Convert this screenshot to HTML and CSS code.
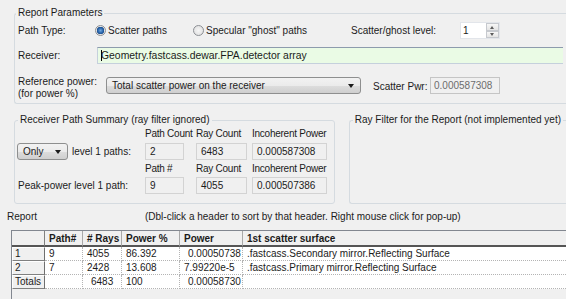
FILE: index.html
```html
<!DOCTYPE html>
<html lang="en">
<head>
    <meta charset="UTF-8">
    <title>Scatter Report</title>
    <link rel="stylesheet" href="styles.css">
</head>
<body>
    <fieldset class="group params">
        <legend>Report Parameters</legend>
        <div class="row pathRow">
            <span class="rowLabel pathLabel">Path Type:</span>
            <span class="radio scatter"><span class="dot checked"></span>Scatter paths</span>
            <span class="radio ghost"><span class="dot"></span>Specular "ghost" paths</span>
            <span class="levelLabel">Scatter/ghost level:</span>
            <div class="spinner">
                <span class="spinValue">1</span>
                <span class="spinButtons"><span class="spinUp"></span><span class="spinDown"></span></span>
            </div>
        </div>
        <div class="row receiverRow">
            <span class="rowLabel receiverLabel">Receiver:</span>
            <div class="receiverField"><span class="caret"></span>Geometry.fastcass.dewar.FPA.detector array</div>
        </div>
        <div class="row refRow">
            <span class="rowLabel refLabel">Reference power:<br>(for power %)</span>
            <div class="combo refCombo">Total scatter power on the receiver<span class="arrow"></span></div>
            <span class="pwrLabel">Scatter Pwr:</span>
            <div class="field disabled pwrField">0.000587308</div>
        </div>
    </fieldset>

    <div class="middle">
        <fieldset class="group summary">
            <legend>Receiver Path Summary (ray filter ignored)</legend>
            <div class="sumRow sumHead">
                <span></span>
                <span>Path Count</span>
                <span>Ray Count</span>
                <span>Incoherent Power</span>
            </div>
            <div class="sumRow sumFields">
                <span class="onlyCell"><span class="combo onlyCombo">Only<span class="arrow"></span></span>level 1 paths:</span>
                <span class="field f1">2</span>
                <span class="field f2">6483</span>
                <span class="field f3">0.000587308</span>
            </div>
            <div class="sumRow sumHead second">
                <span></span>
                <span>Path #</span>
                <span>Ray Count</span>
                <span>Incoherent Power</span>
            </div>
            <div class="sumRow sumFields second">
                <span>Peak-power level 1 path:</span>
                <span class="field f1">9</span>
                <span class="field f2">4055</span>
                <span class="field f3">0.000507386</span>
            </div>
        </fieldset>
        <fieldset class="group filter">
            <legend>Ray Filter for the Report (not implemented yet)</legend>
        </fieldset>
    </div>

    <div class="reportHead">
        <span class="reportTitle">Report</span>
        <span class="hint">(Dbl-click a header to sort by that header. Right mouse click for pop-up)</span>
    </div>

    <div class="tablePane">
        <table class="report">
            <colgroup>
                <col style="width: 33px">
                <col style="width: 38px">
                <col style="width: 39px">
                <col style="width: 58px">
                <col style="width: 63px">
                <col>
            </colgroup>
            <thead>
                <tr>
                    <th class="corner"></th>
                    <th>Path#</th>
                    <th># Rays</th>
                    <th>Power %</th>
                    <th>Power</th>
                    <th class="last">1st scatter surface</th>
                </tr>
            </thead>
            <tbody>
                <tr>
                    <td class="rh">1</td>
                    <td>9</td>
                    <td>4055</td>
                    <td>86.392</td>
                    <td class="lead">0.00050738</td>
                    <td class="last">.fastcass.Secondary mirror.Reflecting Surface</td>
                </tr>
                <tr>
                    <td class="rh">2</td>
                    <td>7</td>
                    <td>2428</td>
                    <td>13.608</td>
                    <td>7.99220e-5</td>
                    <td class="last">.fastcass.Primary mirror.Reflecting Surface</td>
                </tr>
                <tr>
                    <td class="rh">Totals</td>
                    <td></td>
                    <td class="lead">6483</td>
                    <td>100</td>
                    <td class="lead">0.00058730</td>
                    <td class="last"></td>
                </tr>
            </tbody>
        </table>
    </div>
</body>
</html>
```

FILE: styles.css
```css
* {
    box-sizing: border-box;
}

body {
    margin: 0;
    padding-top: 6px;
    width: 566px;
    height: 299px;
    overflow: hidden;
    background-color: #f0f0f0;
    color: #1b1b1b;
    font: 10px "Liberation Sans", Arial, sans-serif;
    white-space: nowrap;
}

.group {
    margin: 0;
    padding: 0 3px;
    border: 1px solid #d5dbe0;
    border-radius: 3px;
}

.group legend {
    padding: 0 2px;
    line-height: 14px;
}

/* the two right-hand groups run on past the window edge */
.params,
.filter {
    border-right: none;
    border-radius: 3px 0 0 3px;
}

/* report parameters */

.params {
    margin-left: 14px;
    width: 552px;
    padding-bottom: 3px;
}

.params legend {
    margin-left: -2px;
}

.row {
    display: flex;
    align-items: center;
}

.pathRow {
    height: 17px;
    margin-top: 2px;
}

.receiverRow {
    height: 17px;
    margin-top: 8px;
}

.refRow {
    height: 24px;
    margin-top: 12px;
    align-items: flex-start;
}

.pathLabel {
    width: 77px;
}

.receiverLabel {
    width: 79px;
}

.refLabel {
    width: 88px;
    line-height: 12px;
}

.radio {
    display: flex;
    align-items: center;
    gap: 2px;
}

.scatter {
    width: 98px;
}

.ghost {
    width: 158px;
}

.dot {
    width: 11px;
    height: 11px;
    border: 1px solid #8c8f94;
    border-radius: 50%;
    background: radial-gradient(circle, #f6f6f6 0, #dcdcdc 100%);
}

.dot.checked {
    background:
        radial-gradient(circle, #6fa6dc 0, #2a66ad 2.5px, #1b4f8f 3.5px, transparent 4px),
        radial-gradient(circle, #f6f6f6 0, #dcdcdc 100%);
}

.levelLabel {
    width: 109px;
}

.spinner {
    display: flex;
    width: 40px;
    height: 17px;
    background-color: #fff;
    border: 1px solid #e2e5ea;
}

.spinValue {
    flex: 1;
    padding-left: 2px;
    line-height: 15px;
}

.spinButtons {
    display: flex;
    flex-direction: column;
    width: 13px;
}

.spinUp,
.spinDown {
    flex: 1;
    position: relative;
    border: 1px solid #c6c9ce;
    background: linear-gradient(#f7f7f7, #e4e4e4);
}

.spinUp::after,
.spinDown::after {
    content: "";
    position: absolute;
    left: 3px;
    top: 2px;
    border-left: 2.5px solid transparent;
    border-right: 2.5px solid transparent;
}

.spinUp::after {
    border-bottom: 3px solid #5c5c5c;
}

.spinDown::after {
    top: 1px;
    border-top: 3px solid #5c5c5c;
}

.receiverField {
    display: flex;
    align-items: center;
    flex: 1;
    height: 17px;
    padding-left: 3px;
    background-color: #eafbe5;
    border: 1px solid #c5d0dc;
    border-top-color: #8d9bad;
    border-right: none;
    font-size: 10.4px;
}

.caret {
    width: 1px;
    height: 11px;
    margin-right: -1px;
    background-color: #000;
}

.combo {
    position: relative;
    display: flex;
    align-items: center;
    height: 17px;
    padding-left: 5px;
    border: 1px solid #8e8f8f;
    border-radius: 3px;
    background: linear-gradient(#f2f2f2 0, #ebebeb 50%, #dddddd 51%, #cfcfcf 100%);
}

.arrow {
    position: absolute;
    right: 6px;
    top: 6px;
    border-left: 3.5px solid transparent;
    border-right: 3.5px solid transparent;
    border-top: 4px solid #1b1b1b;
}

.refCombo {
    width: 255px;
    margin-top: 1px;
}

.pwrLabel {
    width: 57px;
    margin-left: 12px;
    margin-top: 5px;
}

.field {
    display: flex;
    align-items: center;
    height: 17px;
    padding-left: 4px;
    border: 1px solid #d3d3d3;
    background-color: #f0f0f0;
}

.pwrField {
    width: 70px;
    margin-top: 1px;
    padding-left: 3px;
    border-color: #c5c5c5;
}

.disabled {
    color: #6d6d6d;
}

/* summary + filter */

.middle {
    display: flex;
    margin-top: 9px;
}

.summary {
    margin-left: 14px;
    width: 322px;
    padding-bottom: 9px;
}

.filter {
    margin-left: 14px;
    width: 216px;
}

.sumRow {
    display: grid;
    grid-template-columns: 127px 51px 56px 75px;
    align-items: center;
}

.sumHead {
    height: 13px;
    letter-spacing: -0.25px;
}

.sumHead.second {
    height: 14px;
    margin-top: 1px;
}

.sumFields {
    height: 17px;
    margin-top: 3px;
}

.sumFields.second {
    margin-top: 2px;
}

.onlyCell {
    display: flex;
    align-items: center;
    gap: 4px;
}

.onlyCombo {
    width: 51px;
    margin-left: -1px;
}

.f1 {
    width: 39px;
}

.f2 {
    width: 51px;
}

.f3 {
    width: 75px;
}

/* report table */

.reportHead {
    display: flex;
    height: 14px;
    margin-top: 5px;
    padding-left: 7px;
    align-items: center;
}

.reportTitle {
    width: 138px;
}

.tablePane {
    margin-top: 7px;
    margin-left: 11px;
    width: 555px;
    height: 69px;
    border-left: 1px solid #828790;
    border-top: 1px solid #828790;
    overflow: hidden;
}

.report {
    table-layout: fixed;
    border-collapse: separate;
    border-spacing: 0;
    width: 554px;
    font-size: 10px;
}

.report th {
    height: 16px;
    padding: 0 4px;
    text-align: left;
    font-weight: bold;
    background-color: #f0f0f0;
    border-right: 1px solid #a9a9a9;
    border-bottom: 2px solid #555;
}

.report th.corner {
    border-right-color: #808080;
}

.report td {
    height: 13px;
    padding: 0 4px;
    line-height: 12px;
    overflow: hidden;
    background-color: #fff;
    border-right: 1px dotted #b4b4b4;
    border-bottom: 1px dotted #b4b4b4;
}

.report td.rh {
    padding-left: 2px;
    background-color: #f0f0f0;
    border-top: 1px solid #fff;
    border-left: 1px solid #fff;
    border-right: 1px solid #6f6f6f;
    border-bottom: 1px solid #808080;
}

.report td.lead {
    padding-left: 8px;
}

.report .last {
    border-right: none;
}
```
